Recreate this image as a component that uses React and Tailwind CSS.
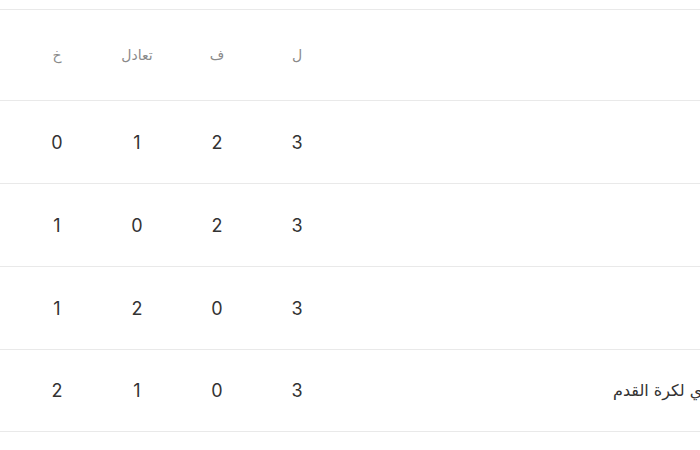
export default function App() {
  const rows = [
    [0, 1, 2, 3, ""],
    [1, 0, 2, 3, ""],
    [1, 2, 0, 3, ""],
    [2, 1, 0, 3, "النادي لكرة القدم"],
  ];
  return (
    <div className="w-[700px] h-[450px] bg-white overflow-hidden pt-[9px]">
      <div className="flex h-[91px] border-t border-[#e9e9e9] items-center pl-[17px] text-[14px] text-[#8a8a8a] font-['DejaVu_Sans',sans-serif]">
        <div className="w-[80px] text-center">خ</div>
        <div className="w-[80px] text-center">تعادل</div>
        <div className="w-[80px] text-center">ف</div>
        <div className="w-[80px] text-center">ل</div>
      </div>
      {rows.map((r, i) => (
        <div
          key={i}
          className={`flex h-[83px] border-t border-[#e9e9e9] items-center pl-[17px] text-[18px] text-[#333] font-['Inter',sans-serif] ${i === rows.length - 1 ? "border-b" : ""}`}
        >
          <div className="w-[80px] text-center">{r[0]}</div>
          <div className="w-[80px] text-center">{r[1]}</div>
          <div className="w-[80px] text-center">{r[2]}</div>
          <div className="w-[80px] text-center">{r[3]}</div>
          <div className="flex-1 overflow-hidden pl-[276px]">
            <div dir="rtl" className="whitespace-nowrap text-left text-[16px] text-[#333] font-['DejaVu_Sans',sans-serif] w-[200px]">
              {r[4]}
            </div>
          </div>
        </div>
      ))}
    </div>
  );
}
